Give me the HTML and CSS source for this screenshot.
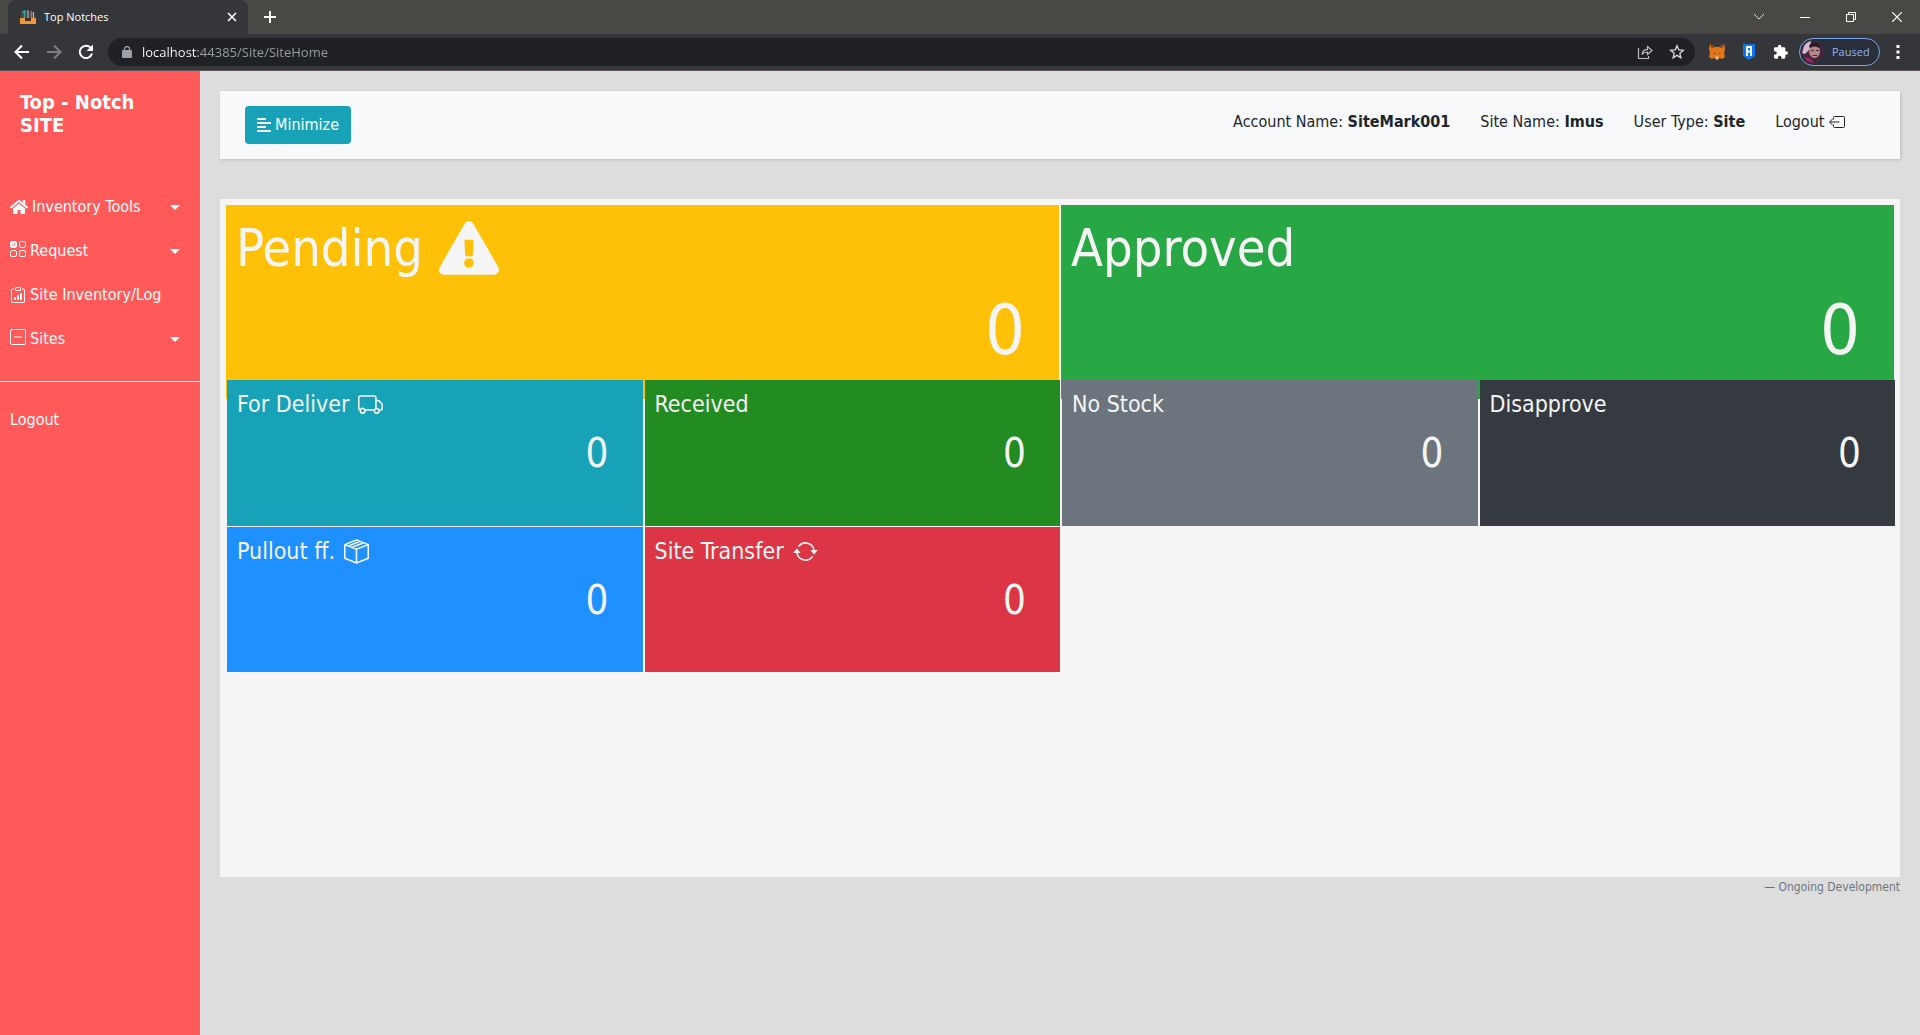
FILE: index.html
```html
<!DOCTYPE html>
<html lang="en">
<head>
<meta charset="utf-8">
<title>Top Notches</title>
<link rel="stylesheet" href="styles.css">
</head>
<body>
<header class="browser">
  <div class="tabstrip">
    <div class="tab">
      <svg class="favicon" viewBox="0 0 16 16"><path fill="#3c4a50" d="M1 3h14v7H1z"/><path stroke="#2fa6a0" stroke-width="1.5" d="M4.500 1v8M2 3h4"/><path stroke="#c9c9c9" d="M8 1v8"/><path stroke="#e0662f" stroke-width="1.500" d="M11.500 2v7"/><path stroke="#d8b080" d="M13.500 3v6"/><path fill="#f0953a" d="M0 9h16v6H0z"/><path fill="#4a3323" d="M5 9h6v3H5z"/></svg>
      <span class="tab-title">Top Notches</span>
      <button class="plain tab-close" aria-label="Close tab"><svg width="10" height="10" viewBox="0 0 10 10"><path d="M1 1l8 8M9 1L1 9" stroke="#fff" stroke-width="1.600"/></svg></button>
    </div>
    <button class="plain new-tab" aria-label="New tab"><svg width="12" height="12" viewBox="0 0 12 12"><path d="M6 0v12M0 6h12" stroke="#fff" stroke-width="2"/></svg></button>
    <div class="window-controls">
      <button class="plain" aria-label="Search tabs"><svg width="12" height="12" viewBox="0 0 12 12"><path d="M1 3l5 5 5-5" fill="none" stroke="#ddd"/></svg></button>
      <button class="plain" aria-label="Minimize window"><svg width="10" height="10" viewBox="0 0 10 10"><path d="M0 5.500h10" stroke="#fff"/></svg></button>
      <button class="plain" aria-label="Restore window"><svg width="10" height="10" viewBox="0 0 10 10"><path d="M.5 2.500h7v7h-7zM2.500 2.500v-2h7v7h-2" fill="none" stroke="#fff"/></svg></button>
      <button class="plain" aria-label="Close window"><svg width="10" height="10" viewBox="0 0 10 10"><path d="M0 0l10 10M10 0L0 10" stroke="#fff" stroke-width="1.200"/></svg></button>
    </div>
  </div>
  <div class="toolbar">
    <button class="plain" aria-label="Back"><svg width="16" height="16" viewBox="0 0 16 16"><path d="M15 8H2M8 1.500L1.500 8 8 14.500" fill="none" stroke="#fff" stroke-width="2"/></svg></button>
    <button class="plain" aria-label="Forward"><svg width="16" height="16" viewBox="0 0 16 16"><path d="M1 8h13M8 1.500L14.500 8 8 14.500" fill="none" stroke="#7d7e81" stroke-width="2"/></svg></button>
    <button class="plain" aria-label="Reload"><svg width="16" height="16" viewBox="0 0 16 16"><path d="M13 4.200A6.200 6.200 0 1 0 14 9.500" fill="none" stroke="#fff" stroke-width="2"/><path d="M15 .5v6.500H8.500z" fill="#fff"/></svg></button>
    <div class="omnibox">
      <svg width="10" height="12" viewBox="0 0 10 12"><path fill="#9aa0a6" d="M1 4h8a1 1 0 0 1 1 1v6a1 1 0 0 1-1 1H1a1 1 0 0 1-1-1V5a1 1 0 0 1 1-1z"/><path fill="none" stroke="#9aa0a6" stroke-width="1.300" d="M2.500 4.500V3a2.500 2.500 0 0 1 5 0v1.500"/></svg>
      <input class="address" type="text" aria-label="Address" value="localhost:44385/Site/SiteHome">
      <button class="plain" aria-label="Share"><svg width="16" height="16" viewBox="0 0 16 16"><path d="M1.500 4v10.500h10V12M5 10.500c.5-3.500 2-5 5.500-5.200V2.500L15 6.500l-4.500 4V8C8 8 6.500 8.500 5 10.500z" fill="none" stroke="#bdc1c6" stroke-width="1.200"/></svg></button>
      <button class="plain" aria-label="Bookmark"><svg width="16" height="16" viewBox="0 0 16 16"><path d="M8 1.800l1.800 4.100 4.500.4-3.400 3 1 4.400L8 11.400l-3.900 2.300 1-4.400-3.400-3 4.500-.4z" fill="none" stroke="#d0d3d6" stroke-width="1.400"/></svg></button>
    </div>
    <div class="extensions">
      <button class="plain tool" aria-label="Wallet extension"><svg width="16" height="16" viewBox="0 0 18 16" preserveAspectRatio="none"><path fill="#e2761b" d="M1 0l6 3h4l6-3 1 5-1 4 1 4-3 2-3-1-2 2H8l-2-2-3 1-3-2 1-4-1-4z"/><path fill="#8a4a18" d="M1 0l6 3-4 1.500zM17 0l-6 3 4 1.500zM5.500 8.500L8 9.500 5.500 10zM12.500 8.500L10 9.500l2.500.5z"/><path fill="#d7c1b3" d="M7 12.500h4L10 15H8z"/></svg></button>
      <button class="plain tool" aria-label="Shield extension"><svg width="12" height="16" viewBox="0 0 12 16"><path fill="#1273ea" d="M0 0h12v12l-6 4-6-4z"/><path fill="none" stroke="#fff" stroke-width="1.800" d="M4 12V3h4v9M4 7.500h4"/></svg></button>
      <button class="plain tool" aria-label="Extensions"><svg width="16" height="16" viewBox="1 0 24 24"><path fill="#fff" d="M21 11h-1.500V7c0-1.100-.9-2-2-2h-4V3.500a2.500 2.500 0 0 0-5 0V5h-4c-1.100 0-2 .9-2 2v3.800H4a2.700 2.700 0 0 1 0 5.400H2.500V20c0 1.100.9 2 2 2h3.800v-1.500a2.700 2.700 0 0 1 5.400 0V22h3.800c1.100 0 2-.9 2-2v-4H21a2.500 2.500 0 0 0 0-5z"/></svg></button>
      <button class="profile">
        <svg width="22" height="22" viewBox="0 0 22 22"><circle cx="11" cy="11" r="11" fill="#43283c"/><path fill="#d9b6cc" d="M2 5a11 11 0 0 1 7-5l-1 8-5 5-3-1z"/><ellipse cx="12.500" cy="10" rx="5.500" ry="7" fill="#b98686"/><path fill="#2c1a27" d="M7 5c2-4 8-5 11 0l-1 2c-3-2-6-2-9 0z"/><path fill="#46283a" d="M9 9h3v1H9zM14 9h3v1h-3zM11 14h4v1h-4z"/><path fill="#a51e68" d="M2 16l6 1 4 5a11 11 0 0 1-10-6z"/></svg>
        <span>Paused</span>
      </button>
      <button class="plain" aria-label="Menu"><svg width="4" height="14" viewBox="0 0 4 14"><path fill="#fff" d="M.5 0h3v3h-3zM.5 5.500h3v3h-3zM.5 11h3v3h-3z"/></svg></button>
    </div>
  </div>
</header>

<div class="page">
  <aside class="sidebar">
    <h1 class="brand">Top - Notch<br>SITE</h1>
    <nav>
      <ul class="menu">
        <li><a href="#"><svg class="wide-icon" viewBox="0 0 576 512" fill="currentColor"><path d="M280.400 148.300L96 300.100V464a16 16 0 0 0 16 16l112.100-.3a16 16 0 0 0 15.900-16V368a16 16 0 0 1 16-16h64a16 16 0 0 1 16 16v95.600a16 16 0 0 0 16 16.100L464 480a16 16 0 0 0 16-16V300L295.700 148.300a12.200 12.200 0 0 0-15.300 0zM571.600 251.500L488 182.600V44.100a12 12 0 0 0-12-12h-56a12 12 0 0 0-12 12v72.600L318.500 43a48 48 0 0 0-61 0L4.300 251.500a12 12 0 0 0-1.600 16.900l25.500 31a12 12 0 0 0 16.900 1.600l235.200-193.700a12.200 12.200 0 0 1 15.300 0L530.900 301a12 12 0 0 0 16.900-1.600l25.500-31a12 12 0 0 0-1.700-16.900z"/></svg><span>Inventory Tools</span><i class="caret"></i></a></li>
        <li><a href="#"><svg class="icon raised" viewBox="0 0 16 16" fill="none" stroke="currentColor"><rect x=".5" y=".5" width="6" height="6" rx="1.500" fill="currentColor"/><path d="M2 3.500l1.200 1.200L5.500 2.300" stroke="#ff5959"/><rect x="9.500" y=".5" width="6" height="6" rx="1.500"/><rect x=".5" y="9.500" width="6" height="6" rx="1.500"/><rect x="9.500" y="9.500" width="6" height="6" rx="1.500"/></svg><span>Request</span><i class="caret"></i></a></li>
        <li><a href="#"><svg class="icon" viewBox="0 0 16 16" fill="currentColor"><path d="M4 11a1 1 0 1 1 2 0v1a1 1 0 1 1-2 0v-1zm6-4a1 1 0 1 1 2 0v5a1 1 0 1 1-2 0V7zM7 9a1 1 0 0 1 2 0v3a1 1 0 1 1-2 0V9z"/><path d="M4 1.500H3a2 2 0 0 0-2 2V14a2 2 0 0 0 2 2h10a2 2 0 0 0 2-2V3.500a2 2 0 0 0-2-2h-1v1h1a1 1 0 0 1 1 1V14a1 1 0 0 1-1 1H3a1 1 0 0 1-1-1V3.500a1 1 0 0 1 1-1h1v-1z"/><path d="M9.500 1a.5.5 0 0 1 .5.5v1a.5.5 0 0 1-.5.5h-3a.5.5 0 0 1-.5-.5v-1a.5.500 0 0 1 .5-.5h3zm-3-1A1.500 1.500 0 0 0 5 1.500v1A1.500 1.500 0 0 0 6.500 4h3A1.500 1.500 0 0 0 11 2.500v-1A1.500 1.500 0 0 0 9.500 0h-3z"/></svg><span>Site Inventory/Log</span></a></li>
        <li><a href="#"><svg class="icon raised" viewBox="0 0 16 16" fill="none" stroke="currentColor"><rect x=".5" y=".5" width="15" height="15" rx="1.500"/><path d="M4 8h8"/></svg><span>Sites</span><i class="caret"></i></a></li>
      </ul>
      <ul class="menu menu-account">
        <li><a href="#">Logout</a></li>
      </ul>
    </nav>
  </aside>

  <main class="content">
    <div class="topbar">
      <button class="minimize"><svg width="14" height="16" viewBox="0 0 448 512" fill="currentColor"><path d="M12.800 352h262.400a12.800 12.800 0 0 0 12.800-12.800v-38.400a12.800 12.800 0 0 0-12.800-12.800H12.800A12.800 12.800 0 0 0 0 300.800v38.400A12.800 12.800 0 0 0 12.800 352zm0-256h262.400A12.800 12.800 0 0 0 288 83.200V44.800A12.800 12.800 0 0 0 275.200 32H12.800A12.800 12.800 0 0 0 0 44.800v38.400A12.800 12.800 0 0 0 12.800 96zM432 160H16a16 16 0 0 0-16 16v32a16 16 0 0 0 16 16h416a16 16 0 0 0 16-16v-32a16 16 0 0 0-16-16zm0 256H16a16 16 0 0 0-16 16v32a16 16 0 0 0 16 16h416a16 16 0 0 0 16-16v-32a16 16 0 0 0-16-16z"/></svg><span>Minimize</span></button>
      <ul class="account">
        <li>Account Name: <b>SiteMark001</b></li>
        <li>Site Name: <b>Imus</b></li>
        <li>User Type: <b>Site</b></li>
        <li><a href="#">Logout <svg class="icon" viewBox="0 0 16 16" fill="none" stroke="currentColor" stroke-linecap="round" stroke-linejoin="round"><path d="M4.500 5V3.500a1 1 0 0 1 1-1h9a1 1 0 0 1 1 1v9a1 1 0 0 1-1 1h-9a1 1 0 0 1-1-1V11M10 8H1M3.500 5L.7 8l2.800 3"/></svg></a></li>
      </ul>
    </div>

    <section class="board">
      <div class="tiles tiles-large">
        <article class="tile pending"><h2>Pending <svg viewBox="0 0 576 512" fill="currentColor"><path d="M569.500 440C588 472 564.800 512 527.900 512H48.100c-36.900 0-60-40.100-41.600-72L246.400 24c18.500-32 64.700-32 83.200 0l239.900 416zM288 354a46 46 0 1 0 0 92 46 46 0 0 0 0-92zm-43.700-165.300l7.400 136a12 12 0 0 0 12 11.300h48.600a12 12 0 0 0 12-11.300l7.400-136a12 12 0 0 0-12-12.700h-63.400a12 12 0 0 0-12 12.700z"/></svg></h2><p>0</p></article>
        <article class="tile approved"><h2>Approved</h2><p>0</p></article>
      </div>
      <div class="tiles tiles-small">
        <article class="tile deliver"><h2>For Deliver <svg viewBox="0 0 16 16" fill="currentColor"><path d="M0 3.500A1.500 1.500 0 0 1 1.500 2h9A1.500 1.500 0 0 1 12 3.500V5h1.020a1.500 1.500 0 0 1 1.170.563l1.481 1.850a1.500 1.500 0 0 1 .329.938V10.500a1.500 1.500 0 0 1-1.500 1.500H14a2 2 0 1 1-4 0H5a2 2 0 1 1-3.998-.085A1.500 1.500 0 0 1 0 10.500v-7zm1.294 7.456A1.999 1.999 0 0 1 4.732 11h5.536a2.010 2.010 0 0 1 .732-.732V3.500a.5.5 0 0 0-.5-.5h-9a.5.500 0 0 0-.5.500v7a.5.500 0 0 0 .294.456zM12 10a2 2 0 0 1 1.732 1h.768a.5.500 0 0 0 .5-.5V8.350a.5.500 0 0 0-.11-.312l-1.480-1.850A.5.500 0 0 0 13.020 6H12v4zm-9 1a1 1 0 1 0 0 2 1 1 0 0 0 0-2zm9 0a1 1 0 1 0 0 2 1 1 0 0 0 0-2z"/></svg></h2><p>0</p></article>
        <article class="tile received"><h2>Received</h2><p>0</p></article>
        <article class="tile no-stock"><h2>No Stock</h2><p>0</p></article>
        <article class="tile disapprove"><h2>Disapprove</h2><p>0</p></article>
        <article class="tile pullout"><h2>Pullout ff. <svg viewBox="0 0 16 16" fill="none" stroke="currentColor" stroke-linejoin="round"><path d="M8 .6l7.500 3v8.700L8 15.400.5 12.300V3.600zM.5 3.600l7.500 3 7.500-3M8 6.600v8.800M3 4.400l7.300-2.900M5.200 5.300l7.500-2.900"/></svg></h2><p>0</p></article>
        <article class="tile transfer"><h2>Site Transfer <svg viewBox="0 0 16 16" fill="currentColor"><path d="M11.534 7h3.932a.25.25 0 0 1 .192.410l-1.966 2.360a.25.25 0 0 1-.384 0l-1.966-2.360a.25.25 0 0 1 .192-.410zm-11 2h3.932a.25.25 0 0 0 .192-.410L2.692 6.230a.25.25 0 0 0-.384 0L.342 8.590A.25.25 0 0 0 .534 9z"/><path d="M8 3c-1.552 0-2.940.707-3.857 1.818a.5.5 0 1 1-.771-.636A6.002 6.002 0 0 1 13.917 7H12.900A5.002 5.002 0 0 0 8 3zM3.100 9a5.002 5.002 0 0 0 8.757 2.182.5.5 0 1 1 .771.636A6.002 6.002 0 0 1 2.083 9H3.100z"/></svg></h2><p>0</p></article>
      </div>
    </section>
    <footer class="note">— Ongoing Development</footer>
  </main>
</div>
</body>
</html>
```
FILE: styles.css
```css
* { box-sizing: border-box; }

body {
  margin: 0;
  min-height: 100vh;
  display: flex;
  flex-direction: column;
  background: #ddd;
  color: #212529;
  font: 16px/24px "DejaVu Sans Condensed", Tahoma, "DejaVu Sans", sans-serif;
}

h1, h2, p, ul { margin: 0; padding: 0; font-weight: 400; }
ul { list-style: none; }
a { color: inherit; text-decoration: none; }
svg { flex: none; }
button { font: inherit; cursor: pointer; }
.icon { width: 16px; height: 16px; }

/* Browser frame */
.browser { font: 12px/16px "Open Sans", "Segoe UI", sans-serif; color: #fff; }
.plain { display: flex; align-items: center; justify-content: center; padding: 0; border: 0; background: none; }
.tabstrip { display: flex; align-items: center; height: 34px; padding-left: 8px; background: #4a4845; }
.tab { display: flex; align-items: center; width: 240px; height: 34px; padding: 0 11px 0 12px; gap: 8px; border-radius: 8px 8px 0 0; background: #35363a; }
.favicon { width: 16px; height: 16px; }
.tab-title { flex: 1; font-size: 11px; }
.new-tab { width: 44px; height: 34px; }
.window-controls { display: flex; margin-left: auto; }
.window-controls .plain { width: 46px; height: 28px; }
.toolbar { display: flex; align-items: center; height: 37px; padding: 0 20px 0 14px; gap: 16px; background: #35363a; border-bottom: 1px solid #5c5659; }
.omnibox { display: flex; flex: 1; align-items: center; height: 28px; margin: 0 -2px; padding: 0 10px 0 14px; gap: 16px; border-radius: 14px; background: #202124; }
.address {
  flex: 1;
  min-width: 0;
  margin-left: -6px;
  padding: 0;
  border: 0;
  outline: 0;
  font: 13px/20px "Open Sans", "Segoe UI", sans-serif;
  color: transparent;
  background: linear-gradient(90deg, #fff 56px, #9aa0a6 56px);
  -webkit-background-clip: text;
  background-clip: text;
}
.extensions { display: flex; align-items: center; gap: 16px; }
.tool { width: 16px; height: 16px; }
.profile { display: flex; align-items: center; gap: 8px; width: 81px; height: 28px; margin-left: -6px; padding: 0 2px; border: 1px solid #7ba4e8; border-radius: 14px; background: #2b2f3a; color: #8ab4f8; font-size: 11px; }

/* Page shell */
.page { display: flex; flex: 1; }
.sidebar { flex: none; width: 200px; background: #ff5959; color: #fff; }
.content { flex: 1; min-width: 0; padding: 20px 20px 0; }

.brand { padding: 20px 20px 0; font-size: 20px; font-weight: 700; line-height: 23px; }
.menu { padding: 48px 0 20px; border-bottom: 1px solid #fff; }
.menu a { display: flex; align-items: center; height: 44px; padding: 0 20px 0 10px; gap: 4px; }
.menu-account { padding: 16px 0; border: 0; }
.wide-icon { width: 18px; height: 16px; }
.raised { margin-bottom: 4px; }
.caret { margin-left: auto; border: 5px solid transparent; border-top-color: #fff; border-bottom: 0; }

.topbar { display: flex; align-items: flex-start; justify-content: space-between; min-height: 68px; padding: 15px 40px 15px 25px; background: #f8f9fa; box-shadow: 1px 1px 3px rgba(0, 0, 0, .15); }
.minimize { display: flex; align-items: center; height: 38px; padding: 0 12px; gap: 4px; border: 0; border-radius: 4px; background: #17a2b8; color: #fff; }
.account { display: flex; }
.account li { padding: 4px 15px; }
.account svg { vertical-align: -3px; }

/* Status board */
.board { min-height: calc(70vh - 47px); margin-top: 40px; padding: 6px; background: #f5f5f5; }
.tiles { display: grid; gap: 1px 2px; }
.tile { color: #f5f5f5; }
.tile h2 { display: flex; align-items: center; }
.tile p { padding-right: 24px; text-align: right; }

.tiles-large { grid-template-columns: repeat(2, 1fr); grid-auto-rows: 194px; }
.tiles-large .tile { padding: 13px 10px; }
.tiles-large h2 { gap: 16px; margin-bottom: 10px; font-size: 52px; line-height: 60px; }
.tiles-large svg { width: 60px; height: 54px; }
.tiles-large p { font-size: 70px; line-height: 84px; }

/* The small tiles cover the lower edge of the large ones */
.tiles-small { position: relative; grid-template-columns: repeat(4, 1fr); grid-template-rows: 146px 145px; margin: -19px -1px 0 1px; }
.tiles-small .tile { padding: 10px; }
.tiles-small h2 { gap: 9px; margin-bottom: 11px; font-size: 23px; line-height: 28px; }
.tiles-small svg { width: 25px; height: 25px; }
.tiles-small p { font-size: 40px; line-height: 48px; }

.pending { background: #ffc107; }
.approved { background: #28a745; }
.deliver { background: #17a2b8; }
.received { background: #228b22; }
.no-stock { background: #6c757d; }
.disapprove { background: #343a40; }
.pullout { background: #1e90ff; }
.transfer { background: #dc3545; }

.note { color: #6c757d; font-size: 12px; line-height: 20px; text-align: right; }
```
